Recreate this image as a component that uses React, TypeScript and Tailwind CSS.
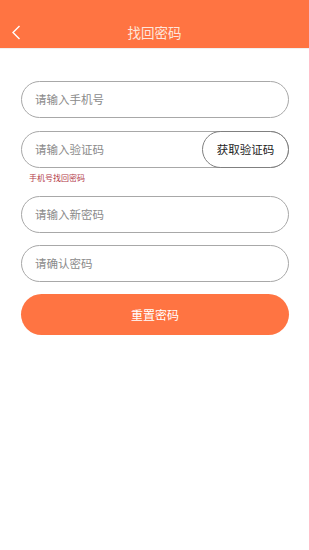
export default function App() {
  const font = { fontFamily: '"Noto Sans CJK SC", "Noto Sans", sans-serif' };
  return (
    <div className="min-h-[550px] w-[309px] bg-white" style={font}>
      <div className="relative flex h-[48px] items-end justify-center bg-[#ff7442] pb-[7px]">
        <svg className="absolute left-[11px] top-[25px]" width="10" height="15" viewBox="0 0 10 15">
          <path d="M8.5 1 L2 7.5 L8.5 14" fill="none" stroke="#fff" strokeWidth="1.4" />
        </svg>
        <span className="text-[13.5px] leading-[18px] text-[#fde6dc]">找回密码</span>
      </div>
      <div className="h-px bg-[#f0f0f0]" />

      <div className="flex flex-col pl-[21px] pr-[20px] pt-[32px]">
        <div className="flex h-[37px] items-center rounded-full border border-[#a8a8a8] px-[13px]">
          <span className="text-[11.5px] text-[#8a8a8a]">请输入手机号</span>
        </div>

        <div className="mt-[13px] flex h-[37px] items-center rounded-full border border-[#a8a8a8] pl-[13px]">
          <span className="flex-1 text-[11.5px] text-[#8a8a8a]">请输入验证码</span>
          <div className="-mr-px flex h-[37px] w-[87px] items-center justify-center rounded-full border border-[#808080] text-[11.5px] text-[#222]">
            获取验证码
          </div>
        </div>
        <div className="mt-[5px] pl-[8px] text-[8px] leading-[10px] text-[#b33a48]">手机号找回密码</div>

        <div className="mt-[13px] flex h-[37px] items-center rounded-full border border-[#a8a8a8] px-[13px]">
          <span className="text-[11.5px] text-[#8a8a8a]">请输入新密码</span>
        </div>

        <div className="mt-[12px] flex h-[37px] items-center rounded-full border border-[#a8a8a8] px-[13px]">
          <span className="text-[11.5px] text-[#8a8a8a]">请确认密码</span>
        </div>

        <button className="mt-[12px] flex h-[41px] items-center justify-center rounded-full bg-[#ff7442] text-[12px] text-white">
          重置密码
        </button>
      </div>
    </div>
  );
}
